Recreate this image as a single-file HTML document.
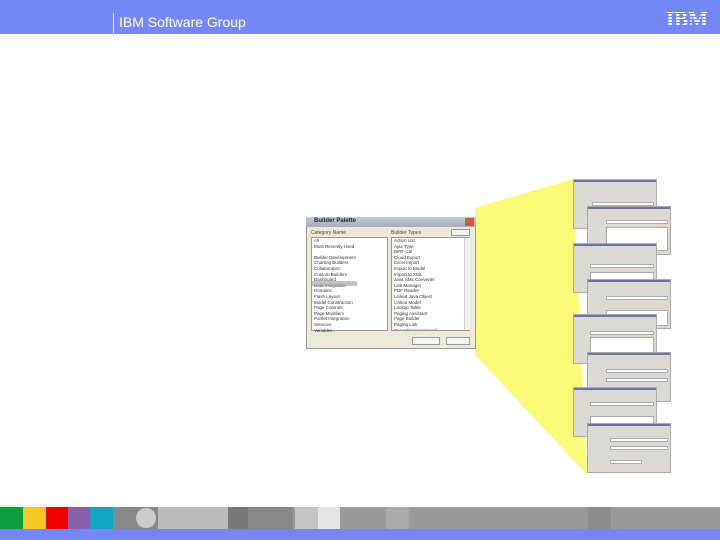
<!DOCTYPE html>
<html><head><style>
body{margin:0;width:720px;height:540px;position:relative;background:#fff;overflow:hidden;font-family:"Liberation Sans",sans-serif}
.a{position:absolute}
.hdr{left:0;top:0;width:720px;height:34px;background:#7587f7}
.win{position:absolute;width:84px;height:50px;background:#dcd9d3;border:1px solid #aaa;box-sizing:border-box}
.win .t{position:absolute;left:0;top:0;right:0;height:2px;background:#6a74a8}
.win .f{position:absolute;background:#fff;border:1px solid #aaa;height:2px}
.win .g{position:absolute;background:#fff;border:1px solid #aaa}
.li{font-size:4.5px;line-height:5.6px;color:#333;white-space:nowrap;padding-left:2px}
</style></head><body>
<div class="a hdr"></div>
<div class="a" style="left:113px;top:13px;width:1px;height:21px;background:#fff"></div>
<div class="a" style="left:119px;top:13px;color:#fff;font-size:14px;line-height:18px">IBM Software Group</div>
<div class="a" style="left:666px;top:8px;color:#fff;font-size:21px;font-weight:bold;line-height:22px;font-family:'Liberation Serif',serif">IBM</div>
<div class="a" style="left:664px;top:10px;width:52px;height:20px;background:repeating-linear-gradient(#7587f7 0 1px,transparent 1px 3px)"></div>

<svg class="a" style="left:0;top:0" width="720" height="540"><polygon points="475,208 573,179 587,475 475,355" fill="#fafa78"/></svg>

<div class="a" style="left:306px;top:217px;width:170px;height:132px;background:#ece9d8;border:1px solid #999;box-sizing:border-box"></div>
<div class="a" style="left:306px;top:217px;width:170px;height:10px;background:linear-gradient(#c8c8d8,#a8aac0)"></div>
<div class="a" style="left:314px;top:218px;font-size:6px;font-weight:bold;color:#223">Builder Palette</div>
<div class="a" style="left:465px;top:218px;width:9px;height:8px;background:#d9553a"></div>
<div class="a" style="left:311px;top:230px;font-size:5px;color:#444">Category Name</div>
<div class="a" style="left:391px;top:230px;font-size:5px;color:#444">Builder Types</div>
<div class="a" style="left:451px;top:229px;width:19px;height:7px;border:1px solid #999;background:#f4f4f0;box-sizing:border-box"></div>
<div class="a" style="left:311px;top:237px;width:77px;height:94px;background:#fff;border:1px solid #999;box-sizing:border-box">
<div class="li">All<br>Most Recently Used<br>&nbsp;<br>Builder Development<br>Charting Builders<br>Collaboration<br>Custom Builders<br>Dashboard<br>Data Integration<br>Domains<br>Flash Layout<br>Model Construction<br>Page Controls<br>Page Modifiers<br>Portlet Integration<br>Services<br>Variables</div></div>
<div class="a" style="left:312px;top:281px;width:45px;height:5px;background:#999;opacity:.6"></div>
<div class="a" style="left:391px;top:237px;width:79px;height:94px;background:#fff;border:1px solid #999;box-sizing:border-box;overflow:hidden">
<div class="li">Action List<br>Ajax Type<br>BIRT Cal<br>Cloud Export<br>Excel Import<br>Import to Model<br>Import to XML<br>Java XML Converter<br>Link Manager<br>PDF Reader<br>Linked Java Object<br>Linked Model<br>Lookup Table<br>Paging Assistant<br>Page Builder<br>Paging Link<br>Reusable Component<br>Portlet Adapter<br>Schema Builder<br>SAP Bapi Call<br>SAP Function</div></div>
<div class="a" style="left:464px;top:238px;width:5px;height:92px;background:#eee;border-left:1px solid #ccc"></div>
<div class="a" style="left:412px;top:337px;width:28px;height:8px;border:1px solid #999;background:#f4f4f0;box-sizing:border-box"></div>
<div class="a" style="left:446px;top:337px;width:24px;height:8px;border:1px solid #999;background:#f4f4f0;box-sizing:border-box"></div>

<div class="win" style="left:573px;top:179px"><div class="t"></div><div class="f" style="left:18px;top:22px;width:60px"></div><div class="g" style="left:18px;top:30px;width:60px;height:10px"></div></div>
<div class="win" style="left:587px;top:206px;height:49px"><div class="t"></div><div class="f" style="left:18px;top:13px;width:60px"></div><div class="g" style="left:18px;top:20px;width:60px;height:22px"></div></div>
<div class="win" style="left:573px;top:243px"><div class="t"></div><div class="f" style="left:16px;top:20px;width:62px"></div><div class="g" style="left:16px;top:28px;width:62px;height:12px"></div></div>
<div class="win" style="left:587px;top:279px"><div class="t"></div><div class="f" style="left:18px;top:16px;width:60px"></div><div class="g" style="left:18px;top:30px;width:60px;height:14px"></div></div>
<div class="win" style="left:573px;top:314px"><div class="t"></div><div class="f" style="left:16px;top:16px;width:62px"></div><div class="g" style="left:16px;top:22px;width:62px;height:22px"></div></div>
<div class="win" style="left:587px;top:352px"><div class="t"></div><div class="f" style="left:18px;top:16px;width:60px"></div><div class="f" style="left:18px;top:25px;width:60px"></div></div>
<div class="win" style="left:573px;top:387px"><div class="t"></div><div class="f" style="left:16px;top:14px;width:62px"></div><div class="g" style="left:16px;top:28px;width:62px;height:12px"></div></div>
<div class="win" style="left:587px;top:423px"><div class="t"></div><div class="f" style="left:22px;top:14px;width:56px"></div><div class="f" style="left:22px;top:22px;width:56px"></div><div class="f" style="left:22px;top:36px;width:30px"></div></div>

<div class="a" style="left:0;top:507px;width:720px;height:22px;background:#999"></div>
<div class="a" style="left:0;top:507px;width:23px;height:22px;background:#0a9e3e"></div>
<div class="a" style="left:23px;top:507px;width:23px;height:22px;background:#f5c823"></div>
<div class="a" style="left:46px;top:507px;width:22px;height:22px;background:#f20000"></div>
<div class="a" style="left:68px;top:507px;width:22px;height:22px;background:#8b5ea8"></div>
<div class="a" style="left:90px;top:507px;width:23px;height:22px;background:#0ea7c2"></div>
<div class="a" style="left:113px;top:507px;width:45px;height:22px;background:#888"></div>
<div class="a" style="left:136px;top:508px;width:20px;height:20px;border-radius:50%;background:#ccc"></div>
<div class="a" style="left:158px;top:507px;width:70px;height:22px;background:#bbb"></div>
<div class="a" style="left:228px;top:507px;width:20px;height:22px;background:#777"></div>
<div class="a" style="left:248px;top:507px;width:45px;height:22px;background:#888"></div>
<div class="a" style="left:295px;top:507px;width:45px;height:22px;background:#c4c4c4"></div>
<div class="a" style="left:318px;top:507px;width:22px;height:22px;background:#e4e4e4"></div>
<div class="a" style="left:386px;top:507px;width:23px;height:22px;background:#aaa"></div>
<div class="a" style="left:588px;top:507px;width:23px;height:22px;background:#8c8c8c"></div>
<div class="a" style="left:0;top:529px;width:720px;height:11px;background:#7587f7"></div>
</body></html>
